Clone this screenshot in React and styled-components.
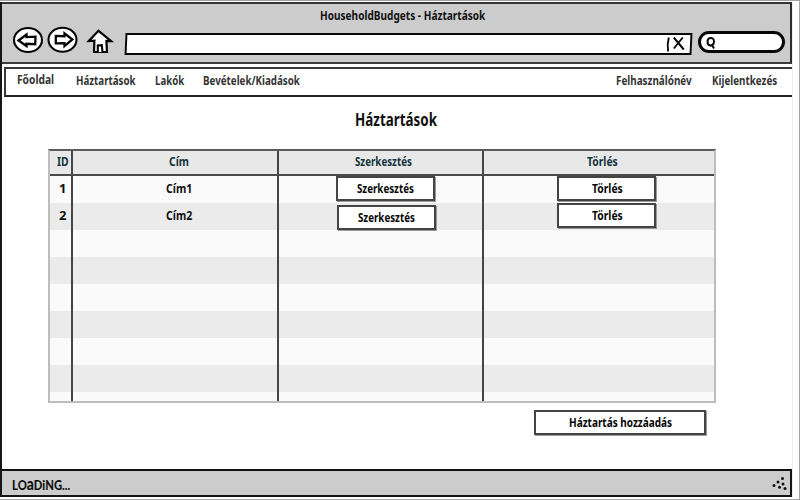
import React, { useLayoutEffect, useRef } from "react";
import styled, { createGlobalStyle } from "styled-components";

const Global = createGlobalStyle`
  *, *::before, *::after { box-sizing: border-box; }
  body { margin: 0; background: #fff; overflow: hidden; }
  button { appearance: none; border-radius: 0; padding: 0; margin: 0; }
`;

const Page = styled.div`
  width: 800px;
  height: 500px;
  padding-top: 1px;
  border-top: 1px solid #a2a2a2;
  border-right: 1px solid #a5a5a5;
  border-bottom: 1px solid #aaa;
  font-family: "Noto Sans", "Open Sans", sans-serif;
  font-weight: 700;
  color: #111;
`;

const Window = styled.div`
  width: 793px;
  height: 495px;
  display: flex;
  flex-direction: column;
  border-left: 2px solid #161616;
  border-right: 1px solid #efefef;
`;

const Chrome = styled.header`
  height: 62px;
  flex: none;
  background: #ccc;
  border-top: 2px solid #333436;
  border-right: 2px solid #2b2b2d;
  border-bottom: 2px solid #3b3c3e;
`;

const TitleBar = styled.div`
  height: 26px;
  padding: 3px 0 0 318px;
`;

const Toolbar = styled.div`
  display: flex;
  align-items: flex-start;
  height: 32px;
  padding-left: 10px;
`;

const ToolIcons = styled.svg`
  flex: none;
  width: 103px;
  height: 30px;
  margin-right: 10px;
  margin-top: -6px;
`;

const AddressBar = styled.div`
  display: flex;
  justify-content: flex-end;
  width: 567px;
  height: 22px;
  margin-top: 3px;
  background: #fff;
  border: 2px solid #080808;
  transform: skewX(-2.5deg);
`;

const ClearIcon = styled.svg`
  width: 26px;
  height: 18px;
`;

const SearchBox = styled.div`
  width: 87px;
  height: 22px;
  margin: 1px 0 0 6px;
  border: 3px solid #050505;
  border-radius: 12px;
  background: #fff;
`;

const SearchIcon = styled.svg`
  display: block;
  width: 16px;
  height: 16px;
  margin-left: 3px;
`;

const NavWrap = styled.div`
  flex: none;
  padding: 3px 0 0 2px;
  border-right: 2px solid transparent;
  width: 792px;
`;

const Nav = styled.nav`
  display: flex;
  height: 30px;
  width: 788px;
  padding: 3px 0 0 11px;
  border: 2px solid #38393b;
  border-right: 0;
  border-bottom-color: #222;
  color: #333;
`;

const Text = styled.span`
  display: block;
  flex: none;
  width: ${(p) => p.$w}px;
  height: ${(p) => p.$line || 16}px;
  line-height: ${(p) => p.$line || 16}px;
  font-size: ${(p) => p.$size || 13}px;
  margin-left: ${(p) => p.$left || 0}px;
  margin-top: ${(p) => p.$top || 0}px;
  white-space: pre;
`;

const Glyphs = styled.span`
  display: inline-block;
  transform-origin: 0 50%;
`;

function Label({ children, ...rest }) {
  const ref = useRef(null);
  useLayoutEffect(() => {
    const el = ref.current;
    el.style.transform = `scaleX(${rest.$w / el.offsetWidth})`;
  }, [children, rest.$w]);
  return (
    <Text {...rest}>
      <Glyphs ref={ref}>{children}</Glyphs>
    </Text>
  );
}

const Main = styled.main`
  flex: 1;
  min-height: 0;
`;

const Heading = styled.h1`
  margin: 0;
  height: 52px;
  padding: 12px 0 0 353px;
  font-weight: 700;
  color: #111;
`;

const Table = styled.section`
  width: 668px;
  height: 254px;
  margin-left: 46px;
  border: 2px solid #bdbdbd;
  border-top-color: #5c5c5c;
  overflow: hidden;
`;

const Row = styled.div`
  display: grid;
  grid-template-columns: 23px 206px 205px 230px;
  height: 27px;
  background: ${(p) => (p.$odd ? "#ebebeb" : "#fafafa")};
`;

const HeadRow = styled(Row)`
  height: 25px;
  background: #e8e8e8;
  border-bottom: 2px solid #4a4a4a;
  color: #12343c;
`;

const Cell = styled.div`
  display: flex;
  align-items: flex-start;
  min-width: 0;
  border-right: 2px solid #444547;
  &:last-child { border-right: 0; }
`;

const Button = styled.button`
  flex: none;
  display: flex;
  align-items: flex-start;
  width: ${(p) => p.$w || 99}px;
  height: 25px;
  margin-left: ${(p) => p.$left}px;
  margin-top: ${(p) => p.$top || 0}px;
  background: #fff;
  border: 2px solid #444446;
  box-shadow: 1px 1px 0 #999;
  font: inherit;
  color: #050505;
`;

const Footer = styled.footer`
  flex: none;
  display: flex;
  justify-content: space-between;
  height: 28px;
  background: #ccc;
  border-top: 2px solid #111;
  border-right: 2px solid #151515;
  border-bottom: 2px solid #151515;
  padding: 4px 1px 0 10px;
  font-family: Lato, sans-serif;
  font-weight: 900;
`;

const TallLetter = styled.span`
  font-size: 16px;
  line-height: 0;
`;

const Grip = styled.svg`
  width: 18px;
  height: 17px;
`;

const records = [
  { id: "1", name: "Cím1", editLeft: 57, editTop: 0, delTop: 0 },
  { id: "2", name: "Cím2", editLeft: 58, editTop: 2, delTop: 0 },
];
const blanks = [0, 1, 2, 3, 4, 5, 6];

export default function App() {
  return (
    <>
      <Global />
      <Page>
        <Window>
          <Chrome>
            <TitleBar>
              <Label $w={165}>HouseholdBudgets - Háztartások</Label>
            </TitleBar>
            <Toolbar>
              <ToolIcons viewBox="12 24 103 30" fill="#fff" stroke="#050505" strokeWidth="2.1">
                <ellipse cx="28" cy="40" rx="14" ry="12" />
                <path d="M18.5 40.5 26.500 34.500v2.600l9-.4-.3 7.500-8.700-.4v2.200Z" strokeWidth="2.300" />
                <ellipse cx="62.5" cy="39.7" rx="14" ry="12" />
                <path d="M72.3 39.5 64.500 33.300v2.900l-8.700-.3v7.500l8.700-.3v3Z" strokeWidth="2.300" />
                <path d="M98.5 30.8 88.8 41l5.600-.4-.4 11.4h13l-.600-11.200 4.500.2Z" strokeWidth="2.200" />
                <path d="M97.8 52v-6.6l4-.3.7 6.900" />
              </ToolIcons>
              <AddressBar>
                <ClearIcon viewBox="0 0 26 18" fill="none" stroke="#080808" strokeWidth="1.9">
                  <path d="M4.500 2.500C3.500 7 3.500 12 4.500 16.500M9.500 2.500l10.500 12M18.500 2.500 10 13.500" />
                </ClearIcon>
              </AddressBar>
              <SearchBox>
                <SearchIcon viewBox="0 0 16 16" fill="none" stroke="#080808" strokeWidth="2">
                  <path d="M5.500 4.200c2.500-.8 4.500.5 4.500 3.300 0 2.500-1.700 4.500-3.800 4.100C3 11 2.600 5.500 5.500 4.200M7.500 10l2.500 4.500" />
                </SearchIcon>
              </SearchBox>
            </Toolbar>
          </Chrome>
          <NavWrap>
            <Nav>
              <Label $w={37} $top={-1}>Főoldal</Label>
              <Label $w={60} $left={22}>Háztartások</Label>
              <Label $w={29} $left={19}>Lakók</Label>
              <Label $w={97} $left={19}>Bevételek/Kiadások</Label>
              <Label $w={76} $left={316}>Felhasználónév</Label>
              <Label $w={65} $left={20}>Kijelentkezés</Label>
            </Nav>
          </NavWrap>
          <Main>
            <Heading>
              <Label $w={82} $size={17} $line={22}>Háztartások</Label>
            </Heading>
            <Table>
              <HeadRow>
                <Cell><Label $w={12} $left={7} $top={2}>ID</Label></Cell>
                <Cell><Label $w={20} $left={96} $top={2}>Cím</Label></Cell>
                <Cell><Label $w={57} $left={76} $top={2}>Szerkesztés</Label></Cell>
                <Cell><Label $w={31} $left={103} $top={2}>Törlés</Label></Cell>
              </HeadRow>
              {records.map((r, i) => (
                <Row key={r.id} $odd={i % 2 === 1}>
                  <Cell><Label $w={7} $left={9} $top={4}>{r.id}</Label></Cell>
                  <Cell><Label $w={26} $left={93} $top={4}>{r.name}</Label></Cell>
                  <Cell>
                    <Button $left={r.editLeft} $top={r.editTop}>
                      <Label $w={57} $left={19} $top={2}>Szerkesztés</Label>
                    </Button>
                  </Cell>
                  <Cell>
                    <Button $left={73} $top={r.delTop}>
                      <Label $w={31} $left={33} $top={2}>Törlés</Label>
                    </Button>
                  </Cell>
                </Row>
              ))}
              {blanks.map((n) => (
                <Row key={n} $odd={n % 2 === 1}>
                  <Cell /><Cell /><Cell /><Cell />
                </Row>
              ))}
            </Table>
            <Button $w={172} $left={532} $top={7}>
              <Label $w={103} $left={33} $top={2}>Háztartás hozzáadás</Label>
            </Button>
          </Main>
          <Footer>
            <Label $w={58} $size={13} $top={2}>LO<TallLetter>a</TallLetter>DiNG...</Label>
            <Grip viewBox="0 0 18 17" fill="#111">
              <circle cx="11.500" cy="3.500" r="1.500" />
              <circle cx="7" cy="7" r="1.500" />
              <circle cx="3" cy="10.500" r="1.500" />
              <circle cx="12" cy="9" r="1.500" />
              <circle cx="8.500" cy="12.300" r="1.500" />
              <circle cx="14" cy="13.500" r="1.500" />
            </Grip>
          </Footer>
        </Window>
      </Page>
    </>
  );
}
